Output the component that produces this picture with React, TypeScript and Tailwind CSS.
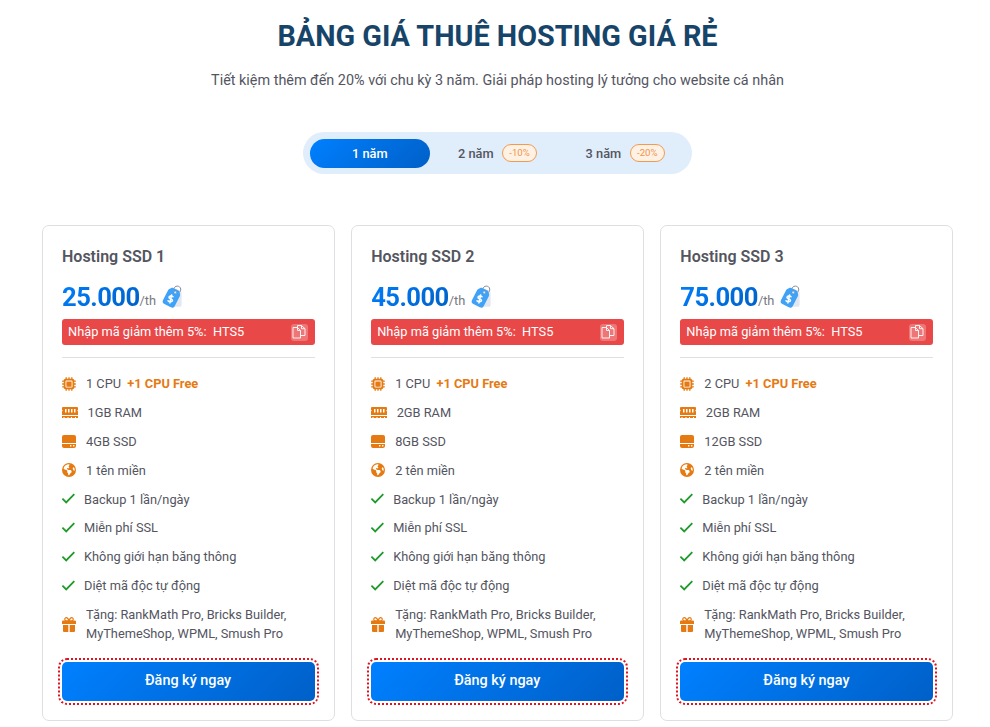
import React from "react";
import { FaMicrochip, FaEarthAmericas } from "react-icons/fa6";

const plans = [
  { name: "Hosting SSD 1", price: "25.000", cpu: "1 CPU", ram: "1GB RAM", ssd: "4GB SSD", domains: "1 tên miền" },
  { name: "Hosting SSD 2", price: "45.000", cpu: "1 CPU", ram: "2GB RAM", ssd: "8GB SSD", domains: "2 tên miền" },
  { name: "Hosting SSD 3", price: "75.000", cpu: "2 CPU", ram: "2GB RAM", ssd: "12GB SSD", domains: "2 tên miền" },
];

const perks = ["Backup 1 lần/ngày", "Miễn phí SSL", "Không giới hạn băng thông", "Diệt mã độc tự động"];

function Tag() {
  return (
    <svg width="22" height="24" viewBox="0 0 22 24" fill="none">
      <path d="M14 4l4 1.500 1.600 2v12c0 1.500-.6 2.300-2 2.300h-6z" fill="#e3e7ef" />
      <path d="M11.800 4C12.400.300 18.200 0 18.700 4c.2 1.400-.3 2.500-1.200 3.300" stroke="#858a9b" strokeWidth="1" />
      <g transform="rotate(27 9.700 12.500)">
        <path d="M6.800 3.300h5.800c.8 0 1.300.3 1.800.9l1.300 1.700c.4.500.6 1 .6 1.700v11c0 2-1 3-3 3H6.100c-2 0-3-1-3-3v-11c0-.7.2-1.200.6-1.700l1.300-1.700c.5-.6 1-.9 1.800-.9z" fill="#40a2f7" />
        <circle cx="10.600" cy="6.300" r="1.400" fill="#d8ecff" stroke="#6e8bad" strokeWidth=".6" />
      </g>
      <path d="M11 11.700c-1.300-1.200-4-.8-4 .8 0 1.800 3.600 1.200 3.500 3-.2 1.800-3.300 1.700-4.500.3M9.600 10l-1.700 7.900" stroke="#fff" strokeWidth="1.500" strokeLinecap="round" />
    </svg>
  );
}

function Memory() {
  return (
    <svg width="16" height="12" viewBox="0 0 16 12" fill="currentColor">
      <path fillRule="evenodd" d="M1 0h14a1 1 0 011 1v1.700a1 1 0 000 1.800V8H0V4.500a1 1 0 000-1.800V1a1 1 0 011-1zM3 2v3.500h1.500V2zm3 0v3.500h1.500V2zm3 0v3.500h1.500V2zm3 0v3.500h1.500V2z" />
      <path d="M0 9h16v2h-2v-1h-1v1h-3v-1H9v1H6.500v-1h-1v1h-3v-1h-1v1H0z" />
    </svg>
  );
}

function Drive() {
  return (
    <svg className="mb-[2px]" width="14" height="13" viewBox="0 0 14 13" fill="currentColor">
      <path d="M2 0h10a2 2 0 012 2v6H0V2a2 2 0 012-2z" />
      <path fillRule="evenodd" d="M0 9h14v2a2 2 0 01-2 2H2a2 2 0 01-2-2zM8 10v1.400h1.400V10zm3 0v1.400h1.400V10z" />
    </svg>
  );
}

function Gift() {
  return (
    <svg className="mb-px" width="14" height="15" viewBox="0 0 14 15" fill="currentColor">
      <path d="M1 3.500h12a1 1 0 011 1V7H0V4.500a1 1 0 011-1zM1 8h5.300v7H2a1 1 0 01-1-1zM7.700 8H13v6a1 1 0 01-1 1H7.700z" />
      <path d="M7 3.800H4.300a1.550 1.550 0 010-3.100C5.700.700 6.500 2.300 7 3.800zM7 3.800h2.700a1.550 1.550 0 000-3.100C8.300.700 7.500 2.300 7 3.800z" fill="#fff" stroke="currentColor" strokeWidth="1.200" />
    </svg>
  );
}

function Copy() {
  return (
    <svg width="17" height="17" viewBox="0 0 17 17" fill="none" stroke="#fff" strokeWidth="1">
      <rect width="17" height="17" rx="3" fill="#fff" fillOpacity=".25" stroke="none" />
      <path d="M2 3.500h4.500l3 3v7.500H2zM6.500 3.500v3h3" strokeOpacity=".9" />
      <path d="M6.500 3.500V1.500h4l3.500 3.200v6.800H9.500M10.500 1.500v3.200h3.500" strokeOpacity=".9" />
    </svg>
  );
}

function Check() {
  return (
    <svg className="mb-[2px] shrink-0" width="14" height="12" viewBox="0 0 14 12" fill="none" stroke="#1f9a2b" strokeWidth="1.800">
      <path d="M.4 5.700l3.800 3.700L12.300 1.200" />
    </svg>
  );
}

function Row({ icon, children }: { icon: React.ReactNode; children: React.ReactNode }) {
  return (
    <li className="flex items-center">
      <span className="flex shrink-0 text-sm text-[#e57a13]">{icon}</span>
      <span className="ml-[10px]">{children}</span>
    </li>
  );
}

function Card({ plan }: { plan: (typeof plans)[number] }) {
  return (
    <article className="h-[496px] rounded-[7px] border border-[#dfdfe2] px-[19px] pt-[19px]">
      <h2 className="text-base leading-[23px] font-semibold text-[#54555f]">{plan.name}</h2>
      <div className="mt-[10px] flex h-[36px] items-center">
        <span className="bg-linear-135 from-[#0080ff] to-[#005fc4] bg-clip-text pt-[2px] text-[25.600px] leading-9 font-bold tracking-[-0.55px] text-transparent">{plan.price}</span>
        <span className="mt-[9px] text-[12.800px] text-[#777982]">/th</span>
        <span className="mt-px ml-[6px]"><Tag /></span>
      </div>
      <div className="mt-[5px] flex h-[26px] items-center justify-between rounded-[3px] bg-[#e94848] pr-[7px] pl-[6px] text-[12.800px] text-white">
        <span className="whitespace-pre">Nhập mã giảm thêm 5%:  HTS5</span>
        <Copy />
      </div>
      <hr className="mt-[12px] border-[#e0e0e3]" />
      <ul className="mt-[17px] flex flex-col gap-[10px] text-[12.800px] leading-[18.88px] text-[#54555f]">
        <Row icon={<FaMicrochip className="mb-px" />}>{plan.cpu} <b className="ml-[3px] font-bold text-[#e57a13]">+1 CPU Free</b></Row>
        <Row icon={<Memory />}><span className="-ml-[0.5px]">{plan.ram}</span></Row>
        <Row icon={<Drive />}>{plan.ssd}</Row>
        <Row icon={<FaEarthAmericas className="mb-[2px]" />}>{plan.domains}</Row>
        {perks.map((p) => (
          <li key={p} className="flex items-center gap-2"><Check />{p}</li>
        ))}
        <Row icon={<Gift />}>Tặng: RankMath Pro, Bricks Builder,<br />MyThemeShop, WPML, Smush Pro</Row>
      </ul>
      <div className="-mx-1 mt-[14.700px] h-[47px] rounded-[9px] border-2 border-dotted border-[#e0121f] p-[2px]">
        <button className="h-[39px] w-full rounded-[5px] bg-linear-135 from-[#0080ff] to-[#0060c8] pr-px pb-[2px] text-[14.400px] font-medium text-white">Đăng ký ngay</button>
      </div>
    </article>
  );
}

export default function App() {
  return (
    <main className="h-[727px] overflow-hidden bg-white pt-[14px] pl-[5px] font-['Roboto',sans-serif]">
      <h1 className="text-center text-[28.800px] leading-[44px] font-bold text-[#174469]">BẢNG GIÁ THUÊ HOSTING GIÁ RẺ</h1>
      <p className="mt-[11px] text-center text-[14.400px] leading-6 text-[#54555f]">Tiết kiệm thêm đến 20% với chu kỳ 3 năm. Giải pháp hosting lý tưởng cho website cá nhân</p>
      <div className="mx-auto mt-[39px] flex h-[42px] w-[389px] items-center rounded-full bg-[#e0edfb] px-[7px] text-[12.800px] font-medium text-[#54555f]">
        <div className="flex h-[29px] w-[120px] items-center justify-center rounded-full bg-linear-135 from-[#0080ff] to-[#0060c8] pt-px text-white">1 năm</div>
        {[["2 năm", "-10%"], ["3 năm", "-20%"]].map(([label, off]) => (
          <div key={label} className="flex w-32 items-center gap-[8.500px] pl-[28.300px]">
            <span className="pt-px">{label}</span>
            <span className="flex h-[18px] w-[35px] items-start justify-center rounded-full border border-[#f29a50] bg-[#fff2e5] pt-px text-[9.600px] leading-[14px] font-normal text-[#f0924a]">{off}</span>
          </div>
        ))}
      </div>
      <div className="ml-[37px] mt-[51px] grid w-[911.500px] grid-cols-3 gap-4">
        {plans.map((p) => <Card key={p.name} plan={p} />)}
      </div>
    </main>
  );
}
